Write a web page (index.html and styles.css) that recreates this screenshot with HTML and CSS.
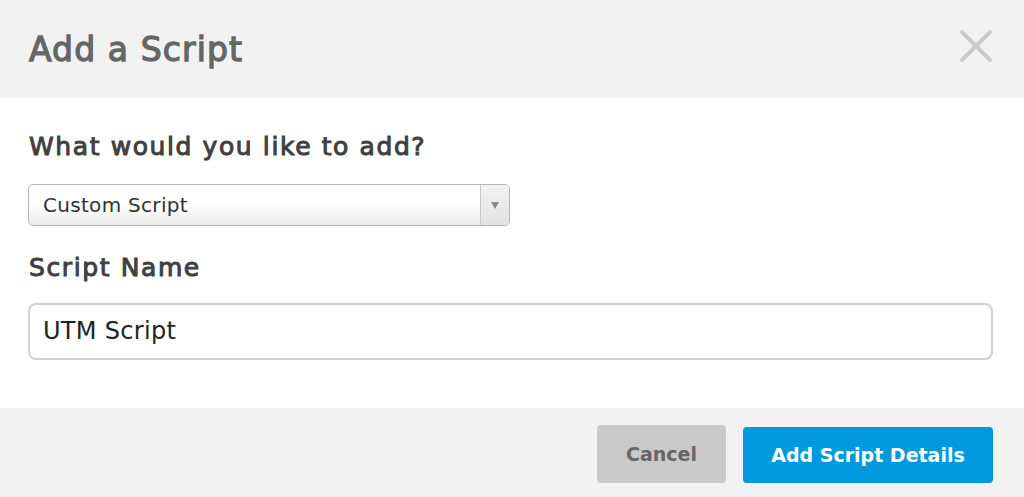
FILE: index.html
```html
<!DOCTYPE html>
<html>
<head>
<meta charset="utf-8">
<link rel="stylesheet" href="styles.css">
</head>
<body>
<div class="modal">
  <header class="modal-header">
    <h1 class="title">Add a Script</h1>
    <button class="close" aria-label="Close">
      <svg width="34" height="32" viewBox="0 0 34 32"><path d="M3 2 L31 30 M31 2 L3 30" stroke="#cbcbcb" stroke-width="4" stroke-linecap="round"/></svg>
    </button>
  </header>
  <main class="modal-body">
    <label class="label">What would you like to add?</label>
    <div class="select">
      <span class="select-text">Custom Script</span>
      <span class="select-arrow"><span class="tri"></span></span>
    </div>
    <label class="label label-2">Script Name</label>
    <div class="input">UTM Script</div>
  </main>
  <footer class="modal-footer">
    <button class="btn btn-cancel">Cancel</button>
    <button class="btn btn-primary">Add Script Details</button>
  </footer>
</div>
</body>
</html>
```
FILE: styles.css
```css
html, body { margin: 0; padding: 0; background: #fff; }
body { font-family: "DejaVu Sans", "Noto Sans", sans-serif; width: 1024px; height: 497px; overflow: hidden; }
.modal { display: flex; flex-direction: column; height: 497px; }
.modal-header {
  height: 98px; background: #f2f2f2; display: flex; align-items: center;
  justify-content: space-between; padding: 0 31px 0 29px; box-sizing: border-box;
}
.title { margin: 0; font-size: 33px; font-weight: normal; color: #666; letter-spacing: 1.1px; -webkit-text-stroke: 1.3px #666; }
.close { border: 0; background: none; padding: 0; display: flex; margin-top: -6px; }
.modal-body { flex: 1; padding: 32px 31px 0 28px; display: flex; flex-direction: column; align-items: flex-start; }
.label { font-size: 25px; font-weight: normal; color: #404040; line-height: 34px; margin-left: 1px; letter-spacing: 1.6px; -webkit-text-stroke: 1px #404040; }
.label-2 { margin-top: 25px; }
.select {
  margin-top: 20px; width: 482px; height: 42px; box-sizing: border-box;
  border: 1px solid #b5b5b5; border-radius: 5px; display: flex;
  background: linear-gradient(#fff 0%, #fff 45%, #ececec 100%);
}
.select-text { flex: 1; padding-left: 14px; font-size: 20px; letter-spacing: 0.3px; color: #333; line-height: 40px; }
.select-arrow { width: 28px; border-left: 1px solid #c8c8c8; display: flex; align-items: center; justify-content: center; background: linear-gradient(#f2f2f2, #e2e2e2); border-radius: 0 4px 4px 0; }
.tri { width: 0; height: 0; border-left: 4px solid transparent; border-right: 4px solid transparent; border-top: 7px solid #888; }
.input {
  margin-top: 18px; width: 965px; height: 57px; box-sizing: border-box;
  border: 2px solid #d2d2d2; border-radius: 8px; padding-left: 13px;
  font-size: 24px; letter-spacing: 0.3px; color: #222; line-height: 53px;
}
.modal-footer {
  height: 89px; background: #f2f2f2; display: flex; align-items: flex-end; justify-content: flex-end;
  padding: 0 31px 14px 0; gap: 17px; box-sizing: border-box;
}
.btn { border: 0; font-family: inherit; font-weight: bold; font-size: 19px; border-radius: 4px; cursor: pointer; padding: 0; }
.btn-cancel { width: 129px; height: 58px; background: #c9c9c9; color: #666; }
.btn-primary { width: 250px; height: 56px; background: #0099dd; color: #fff; }
```
